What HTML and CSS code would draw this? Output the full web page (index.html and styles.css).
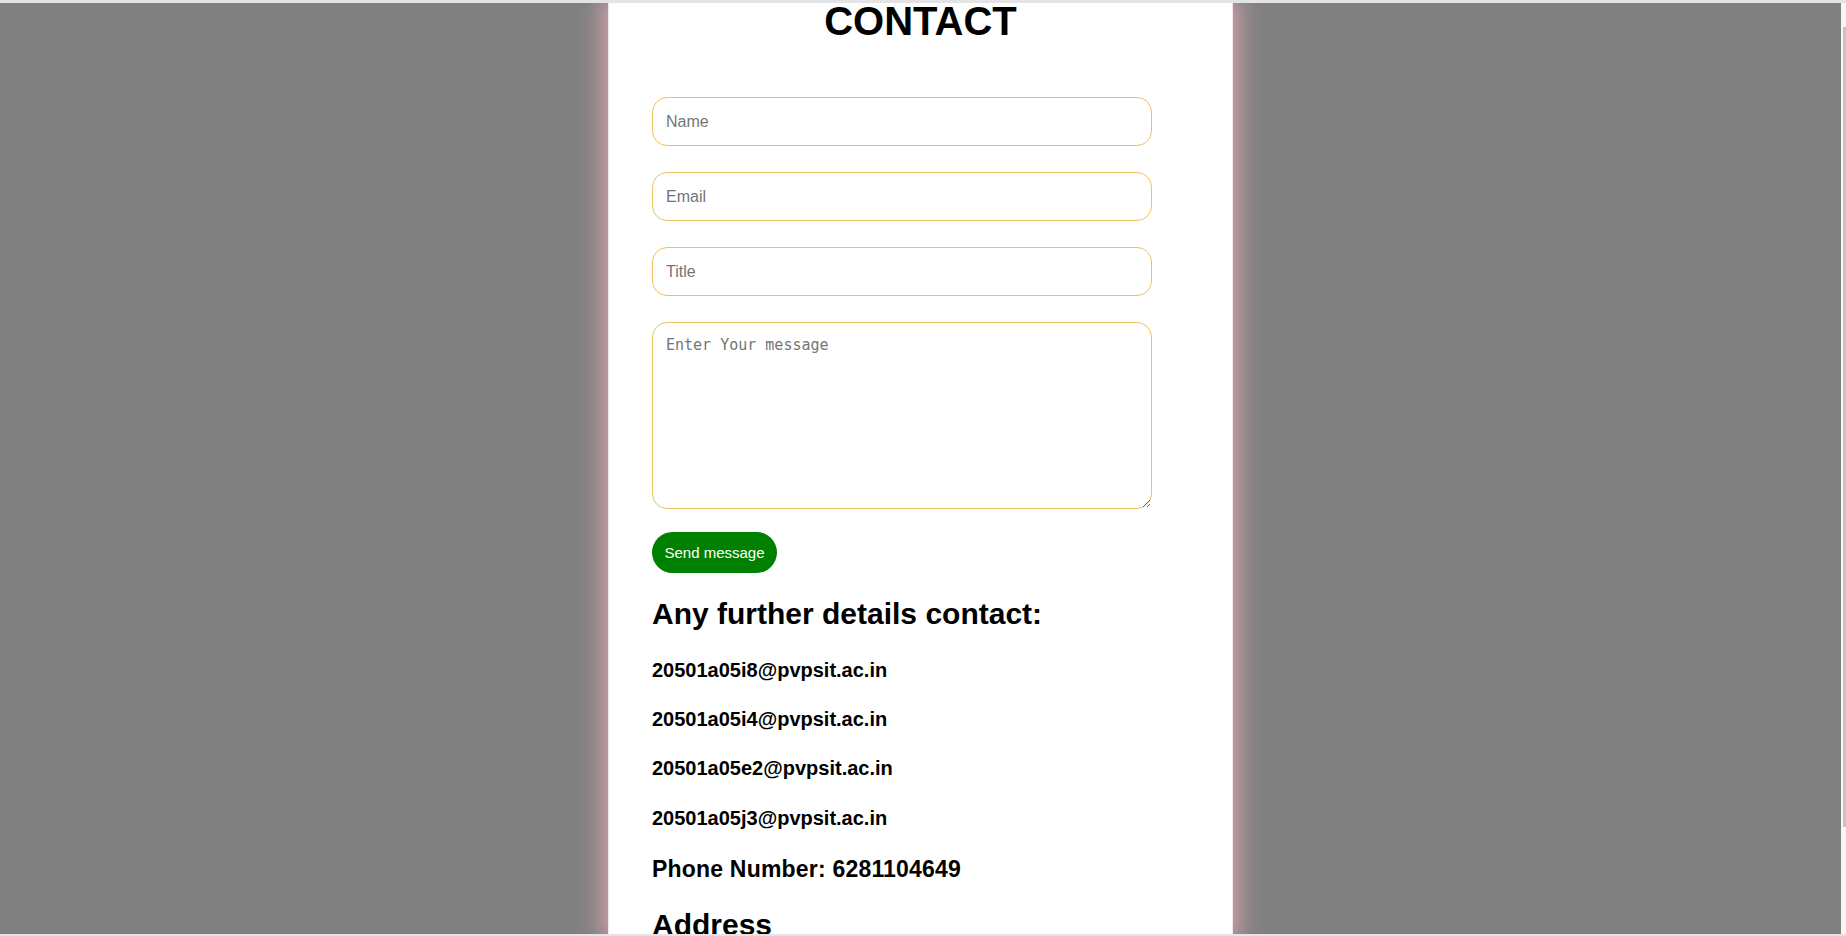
FILE: index.html
```html
<!DOCTYPE html>
<html lang="en">
<head>
<meta charset="utf-8">
<title>Contact</title>
<link rel="stylesheet" href="styles.css">
</head>
<body>
<div class="topbar"></div>
<div class="viewport">
  <div class="stage">
    <main class="card">
      <h1 class="title">CONTACT</h1>
      <form class="form">
        <input class="field" type="text" placeholder="Name">
        <input class="field" type="email" placeholder="Email">
        <input class="field" type="text" placeholder="Title">
        <textarea class="field area" placeholder="Enter Your message"></textarea>
        <button class="send" type="button">Send message</button>
      </form>
      <section class="details">
        <h2 class="sub">Any further details contact:</h2>
        <p class="mail first">20501a05i8@pvpsit.ac.in</p>
        <p class="mail">20501a05i4@pvpsit.ac.in</p>
        <p class="mail">20501a05e2@pvpsit.ac.in</p>
        <p class="mail">20501a05j3@pvpsit.ac.in</p>
        <p class="phone">Phone Number: 6281104649</p>
        <h2 class="address">Address</h2>
      </section>
    </main>
  </div>
  <div class="scroll"><div class="thumb"></div></div>
</div>
<div class="bottombar"></div>
</body>
</html>
```
FILE: styles.css
```css
html, body {
  margin: 0;
  padding: 0;
  height: 100%;
}
body {
  display: flex;
  flex-direction: column;
  overflow: hidden;
  font-family: "Liberation Sans", Arial, sans-serif;
  color: #000;
  background: #808080;
}
.topbar {
  height: 3px;
  flex: none;
  background: #e4e4e4;
}
.bottombar {
  height: 2px;
  flex: none;
  background: #e4e4e4;
}
.viewport {
  flex: 1;
  min-height: 0;
  display: flex;
}
.stage {
  flex: 1;
  display: flex;
  justify-content: center;
  overflow: hidden;
}
.card {
  flex: none;
  width: 625px;
  box-sizing: border-box;
  background: #fff;
  padding: 0 43px;
  border-left: 1px solid #f3e6e9;
  border-right: 1px solid #f3e6e9;
  box-shadow: 0 0 22px 6px rgba(240, 175, 190, 0.75);
}
.scroll {
  flex: none;
  width: 5px;
  background: #f6f6f6;
}
.thumb {
  margin: 24px 0 0 2px;
  width: 3px;
  height: 800px;
  background: #c4c4c4;
}
.title {
  margin: -5px 0 0;
  font-size: 40px;
  line-height: 46px;
  font-weight: 700;
  text-align: center;
}
.form {
  margin-top: 53px;
  display: flex;
  flex-direction: column;
  align-items: flex-start;
  gap: 26px;
}
.field {
  box-sizing: border-box;
  width: 500px;
  height: 49px;
  margin: 0;
  border: 1px solid #f0bf5e;
  border-radius: 15px;
  padding: 0 13px;
  font-family: "Liberation Sans", Arial, sans-serif;
  font-size: 16px;
  color: #000;
  background: #fff;
  outline: none;
}
.field::placeholder {
  color: #757575;
}
.area {
  height: 187px;
  padding: 13px 13px;
  font-family: "DejaVu Sans Mono", "Liberation Mono", monospace;
  font-size: 15px;
  line-height: 18px;
  resize: both;
}
.send {
  margin-top: -3px;
  width: 125px;
  height: 41px;
  border: none;
  border-radius: 21px;
  background: #008000;
  color: #fff;
  font-family: "Liberation Sans", Arial, sans-serif;
  font-size: 15px;
  padding: 0;
}
.details {
  margin-top: 24px;
}
.sub {
  margin: 0;
  font-size: 30px;
  line-height: 34px;
  font-weight: 700;
}
.mail {
  margin: 25.2px 0 0;
  font-size: 20px;
  line-height: 24px;
  font-weight: 700;
}
.mail.first {
  margin-top: 27px;
}
.phone {
  margin: 26.2px 0 0;
  font-size: 23px;
  line-height: 27px;
  font-weight: 700;
  letter-spacing: 0.2px;
}
.address {
  margin: 25.6px 0 0;
  font-size: 30px;
  line-height: 34px;
  font-weight: 700;
}
```
